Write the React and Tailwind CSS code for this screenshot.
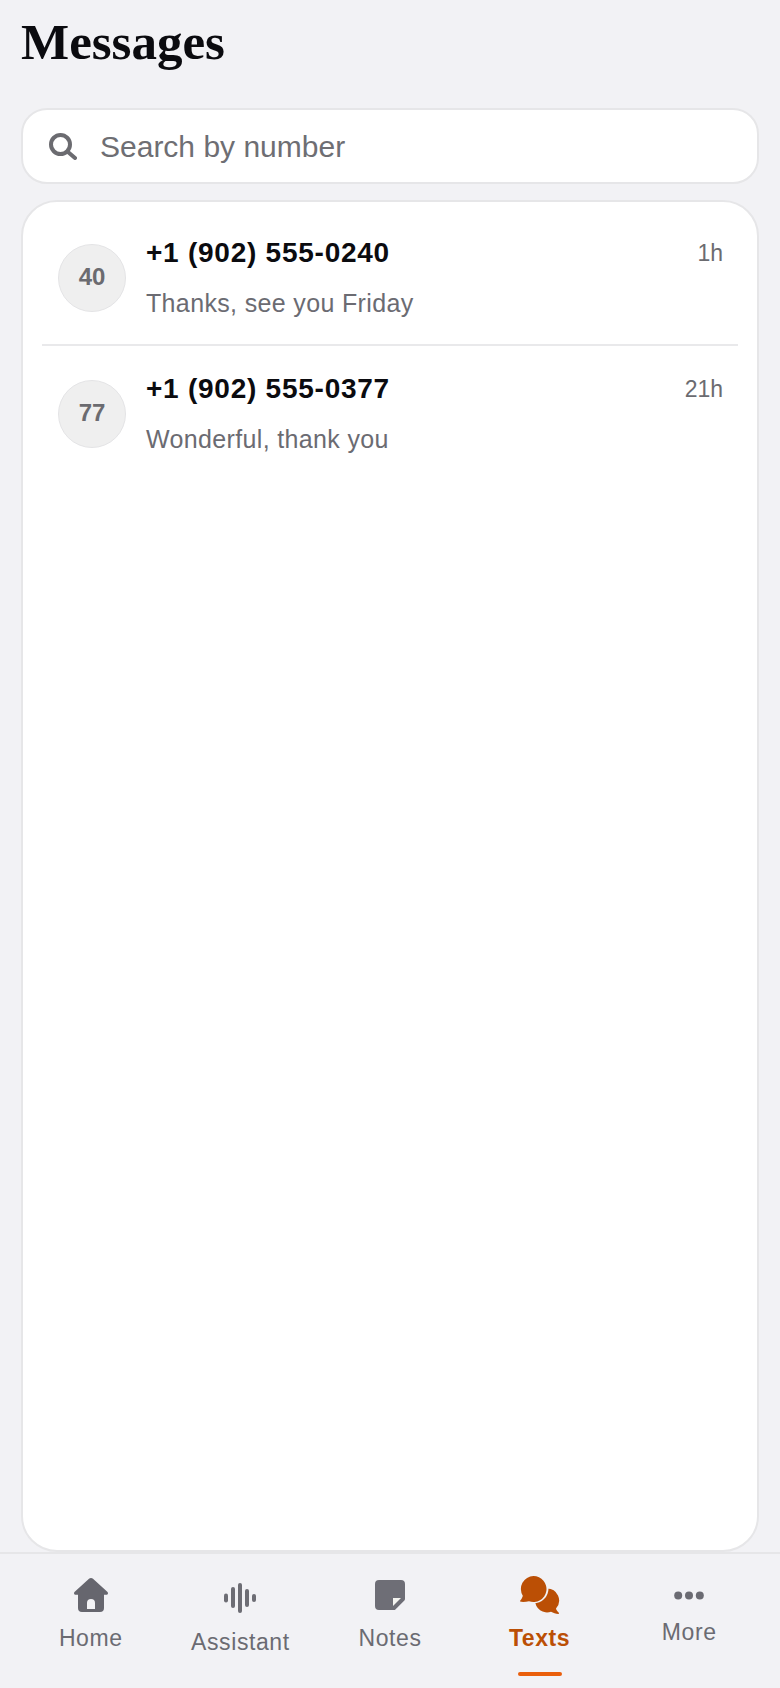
const SANS = { fontFamily: '"Liberation Sans", Arial, sans-serif' };

const threads = [
  { id: '40', number: '+1 (902) 555-0240', preview: 'Thanks, see you Friday', time: '1h' },
  { id: '77', number: '+1 (902) 555-0377', preview: 'Wonderful, thank you', time: '21h' },
];

function SearchIcon() {
  return (
    <svg width="28" height="27" viewBox="0 0 28 27" fill="none" stroke="#6b6b70" strokeWidth="4" strokeLinecap="round" className="shrink-0">
      <circle cx="11.500" cy="11.500" r="9.500" />
      <path d="M19 19 L26 25" />
    </svg>
  );
}

function HomeIcon() {
  return (
    <svg width="34" height="34" viewBox="0 0 34 34" fill="#66666e">
      <path fillRule="evenodd" d="M17 0 c.8 0 1.500 .3 2 .8 L33 13.500 c.8 .7 1.200 1.500 .9 2.200 c-.2 .6 -.8 1 -1.700 1 H30 V30 a4 4 0 0 1 -4 4 H8 a4 4 0 0 1 -4 -4 V16.700 H1.800 c-.9 0 -1.500 -.4 -1.700 -1 c-.3 -.7 .1 -1.500 .9 -2.200 L15 .8 C15.500 .3 16.200 0 17 0 Z M13 31 h8 v-6 a4 4 0 0 0 -8 0 Z" />
    </svg>
  );
}

function WaveIcon() {
  return (
    <svg width="32" height="30" viewBox="0 0 32 30" fill="#6d6d74">
      <rect x="0" y="10.500" width="4" height="9" rx="2" />
      <rect x="7" y="4" width="4" height="21" rx="2" />
      <rect x="14" y="0" width="4" height="30" rx="2" />
      <rect x="21" y="6" width="4" height="18" rx="2" />
      <rect x="28" y="11" width="4" height="8" rx="2" />
    </svg>
  );
}

function NoteIcon() {
  return (
    <svg width="30" height="30" viewBox="0 0 30 30">
      <path d="M4 0 H26 a4 4 0 0 1 4 4 V19 a2 2 0 0 1 -.6 1.400 L20.400 29.400 a2 2 0 0 1 -1.400 .6 H4 a4 4 0 0 1 -4 -4 V4 a4 4 0 0 1 4 -4 Z" fill="#6e6e76" />
      <path d="M18 18 H26 L18 26 Z" fill="#f4f4f0" />
    </svg>
  );
}

function ChatIcon() {
  return (
    <svg width="40" height="38" viewBox="0 0 40 38">
      <path d="M27 12.500 A12 12 0 0 1 36 32.500 C36.300 34 37.500 35.700 38.800 36.800 C39.200 37.300 38.900 38 38.300 37.900 C35.800 37.600 33.200 36.800 31 35.700 A12 12 0 0 1 15 24.500 Z" fill="#bb4f05" />
      <circle cx="13.500" cy="12.500" r="15" fill="#f2f2f5" />
      <path d="M13.500 0 A13 13 0 1 1 9 25.200 C6.500 25.800 3.200 26.200 .8 25.800 C.1 25.700 -.1 25 .3 24.500 C1.500 23.200 2.500 21.500 2.800 19.800 A13 13 0 0 1 13.500 0 Z" fill="#bb4f05" />
    </svg>
  );
}

function MoreIcon() {
  return (
    <svg width="30" height="9" viewBox="0 0 30 9" fill="#6b6b72">
      <circle cx="4.200" cy="4.500" r="4" />
      <circle cx="15" cy="4.500" r="4" />
      <circle cx="25.800" cy="4.500" r="4" />
    </svg>
  );
}

function NavItem({ icon, label, active, className }) {
  return (
    <div className={`flex flex-1 flex-col items-center ${className}`}>
      {icon}
      <span className={`text-[23px] leading-[26px] tracking-[0.6px] ${active ? 'font-bold text-[#bb4f05]' : 'text-[#6b6b72]'}`}>
        {label}
      </span>
    </div>
  );
}

function ThreadRow({ thread, last }) {
  return (
    <div className={`flex h-[136px] items-start ${last ? '' : 'border-b-2 border-[#e9e9eb]'}`}>
      <div className="ml-[16px] mt-[34px] flex h-[68px] w-[68px] shrink-0 items-center justify-center rounded-full border border-[#e4e4e6] bg-[#efefef] pb-[3px] text-[24px] font-bold text-[#6b6b70]">
        {thread.id}
      </div>
      <div className="ml-[20px] mr-[15px] flex-1 pt-[26px]">
        <div className="flex items-center justify-between">
          <span className="text-[28px] leading-[34px] font-bold tracking-[0.75px] text-[#0b0b0f]">{thread.number}</span>
          <span className="text-[23px] text-[#6b6b70]">{thread.time}</span>
        </div>
        <div className="mt-[17px] text-[25px] leading-[30px] tracking-[0.35px] text-[#6b6b72]">{thread.preview}</div>
      </div>
    </div>
  );
}

export default function App() {
  return (
    <div className="flex h-[1688px] w-[780px] flex-col overflow-hidden bg-[#f2f2f5]" style={SANS}>
      <div className="flex min-h-0 flex-1 flex-col px-[21px]">
        <h1 className="mt-[13px] h-[95px] text-[51px] leading-[58px] font-bold text-[#0b0b0f] [font-family:'Liberation_Serif',serif]">
          Messages
        </h1>

        {/* Search */}
        <div className="flex h-[76px] items-center rounded-[26px] border-2 border-[#e6e6e8] bg-white pl-[26px]">
          <SearchIcon />
          <span className="ml-[23px] text-[30px] text-[#6e6e73]">Search by number</span>
        </div>

        {/* Threads */}
        <div className="mt-[16px] flex-1 rounded-[36px] border-2 border-[#e6e6e8] bg-white px-[19px] pt-[8px]">
          {threads.map((t, i) => (
            <ThreadRow key={t.id} thread={t} last={i === threads.length - 1} />
          ))}
        </div>
      </div>

      {/* Bottom nav */}
      <div className="relative flex h-[136px] shrink-0 border-t-2 border-[#e6e6e8] bg-[#f2f2f5] px-[16px]">
        <NavItem icon={<HomeIcon />} label="Home" className="pt-[24px] [&>span]:mt-[13px]" />
        <NavItem icon={<WaveIcon />} label="Assistant" className="pt-[29px] [&>span]:mt-[16px]" />
        <NavItem icon={<NoteIcon />} label="Notes" className="pt-[26px] [&>span]:mt-[15px]" />
        <NavItem icon={<ChatIcon />} label="Texts" active className="pt-[22px] [&>span]:mt-[11px]" />
        <NavItem icon={<MoreIcon />} label="More" className="pt-[37px] [&>span]:mt-[19px]" />
        <div className="absolute left-[518px] top-[118px] h-[4px] w-[44px] rounded-full bg-[#ea5f0c]" />
      </div>
    </div>
  );
}
